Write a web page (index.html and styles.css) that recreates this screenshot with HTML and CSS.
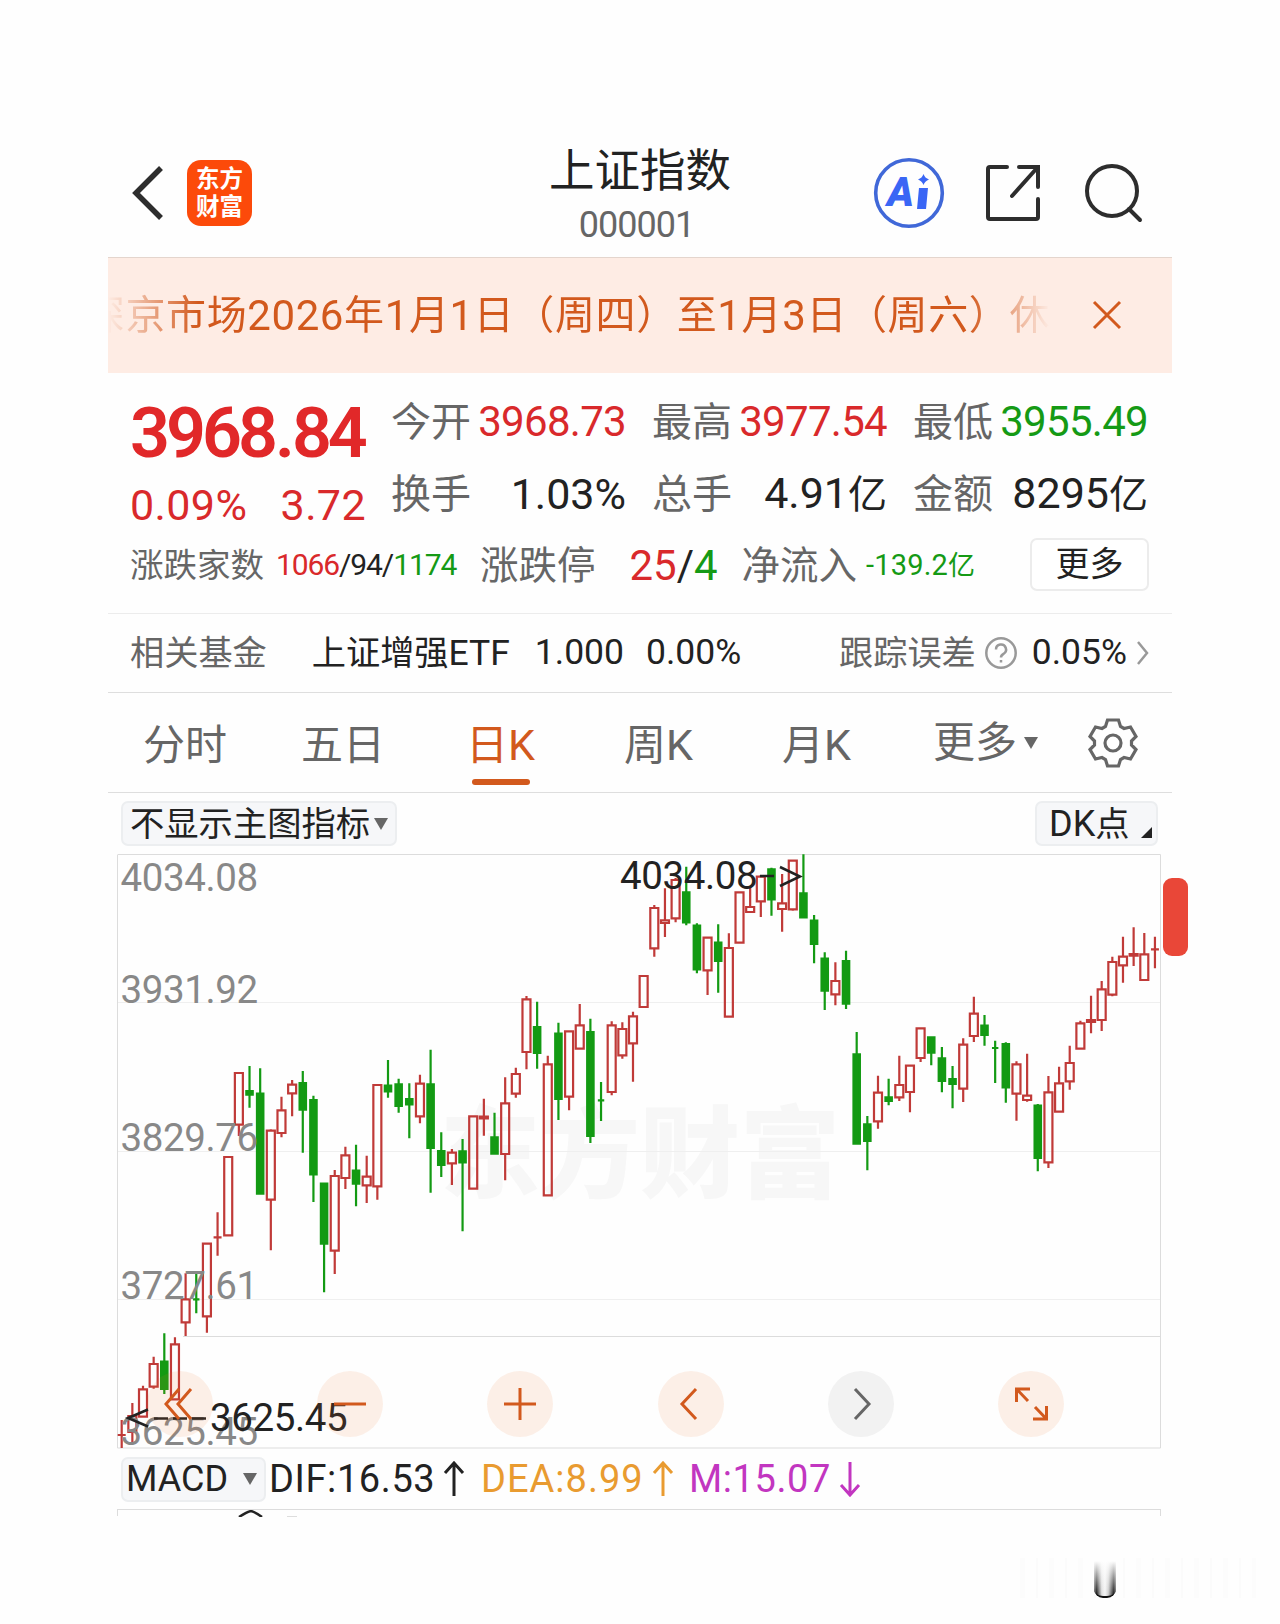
FILE: index.html
```html
<!DOCTYPE html>
<html lang="zh-CN">
<head>
    <meta charset="UTF-8">
    <title>上证指数</title>
    <link rel="stylesheet" href="styles.css">
</head>
<body>
    <div id="app">
        <header class="header">
            <svg class="back" width="34" height="56" viewBox="0 0 34 56"><path d="M31 3 6 28l25 25"/></svg>
            <div class="logo"><span>东方</span><span>财富</span></div>
            <div class="title">
                <h1>上证指数</h1>
                <p>000001</p>
            </div>
            <div class="tools">
                <svg width="72" height="72" viewBox="0 0 72 72">
                    <circle class="ai-ring" cx="36" cy="36" r="33.3"/>
                    <text class="ai-text" x="14" y="49" textLength="27" lengthAdjust="spacingAndGlyphs">A</text>
                    <path class="ai-fill" d="M46 31h9l-2 21h-9z"/>
                    <path class="ai-fill" d="M50.500 17q1.300 4 5.500 5.500-4.200 1.500-5.500 5.500-1.300-4-5.500-5.500 4.200-1.500 5.500-5.500z"/>
                </svg>
                <svg class="share" width="56" height="58" viewBox="0 0 56 58">
                    <path d="M22 3H5q-2 0-2 2v48q0 2 2 2h46q2 0 2-2V35M34 3h19v20M52 4 27 32"/>
                </svg>
                <svg class="search" width="60" height="60" viewBox="0 0 60 60">
                    <circle cx="28" cy="28" r="25"/>
                    <path d="m45 46 11 11"/>
                </svg>
            </div>
        </header>

        <div class="notice">
            <div class="notice-text">深京市场<i>2026</i>年<i>1</i>月<i>1</i>日（周四）至<i>1</i>月<i>3</i>日（周六）休</div>
            <svg class="close" width="30" height="30" viewBox="0 0 30 30"><path d="m2 2 26 26M28 2 2 28"/></svg>
        </div>

        <section class="quote">
            <div class="quote-top">
                <div class="now up">
                    <strong>3968<i>.</i>84</strong>
                    <div class="change"><span>0.09%</span><span>3.72</span></div>
                </div>
                <dl class="stats">
                    <div><dt>今开</dt><dd class="up">3968.73</dd></div>
                    <div><dt>最高</dt><dd class="up">3977.54</dd></div>
                    <div><dt>最低</dt><dd class="down">3955.49</dd></div>
                    <div><dt>换手</dt><dd class="wide">1.03%</dd></div>
                    <div><dt>总手</dt><dd class="wide">4.91<b>亿</b></dd></div>
                    <div><dt>金额</dt><dd class="wide">8295<b>亿</b></dd></div>
                </dl>
            </div>
            <div class="breadth">
                <span class="label small">涨跌家数</span>
                <span class="counts"><span class="up">1066</span>/94/<span class="down">1174</span></span>
                <span class="label">涨跌停</span>
                <span class="limits"><span class="up">25</span>/<span class="down">4</span></span>
                <span class="label">净流入</span>
                <span class="inflow down">-139.2<b>亿</b></span>
                <button class="more">更多</button>
            </div>
        </section>

        <div class="fund">
            <span class="label">相关基金</span>
            <span class="fund-name">上证增强<i>ETF</i></span>
            <i class="fund-price">1.000</i>
            <i class="fund-rate">0.00%</i>
            <span class="label error-label">跟踪误差</span>
            <svg class="help" width="34" height="34" viewBox="0 0 34 34">
                <circle cx="17" cy="17" r="14.700"/>
                <path d="M12 13.500a5 5 0 1 1 7.500 4.300q-2.500 1.400-2.500 3.700M17 24v2.500"/>
            </svg>
            <i class="error-rate">0.05%</i>
            <svg class="arrow" width="14" height="28" viewBox="0 0 14 28"><path d="m2 3 9 11-9 11"/></svg>
        </div>

        <nav class="tabs">
            <a class="tab">分时</a>
            <a class="tab">五日</a>
            <a class="tab k active">日<i>K</i></a>
            <a class="tab k">周<i>K</i></a>
            <a class="tab k">月<i>K</i></a>
            <a class="tab tab-more">更多<span class="caret"></span></a>
            <svg class="gear" width="52" height="52" viewBox="-26 -26 52 52">
                <path d="M-5.500-23H5.500L7.500-16.500 11-14.500 17.500-16 23-6.500 18.500-2V2L23 6.500 17.500 16 11 14.500 7.500 16.500 5.500 23H-5.500L-7.500 16.500-11 14.500-17.500 16-23 6.500-18.500 2V-2L-23-6.500-17.500-16-11-14.500-7.500-16.500z"/>
                <circle r="8"/>
            </svg>
        </nav>

        <div class="indicator-bar">
            <div class="chip">不显示主图指标<span class="caret"></span></div>
            <div class="chip dk"><i>DK</i>点<span class="corner"></span></div>
        </div>

        <div class="chart">
            <svg width="1044" height="596" viewBox="0 0 1044 596">
                <text class="brand" x="323" y="336">东方财富</text>
                <g class="grid">
                    <path d="M1 148.500h1042M1 297.500h1042M1 445.500h1042"/>
                    <path class="gap-line" d="M66 482.500h977"/>
                    <path class="frame" d="M1 .500h1042.500v593.500H.500V.500"/>
                </g>
                <g id="candles"></g>
                <g class="axis">
                    <text x="3.500" y="37">4034.08</text>
                    <text x="3.500" y="149">3931.92</text>
                    <text x="3.500" y="297">3829.76</text>
                    <text x="3.500" y="445">3727.61</text>
                    <text x="3.500" y="591">3625.45</text>
                </g>
                <g class="mark">
                    <text x="503" y="34.500">4034.08</text>
                    <path d="M643 22h14M663 13l20 9.500-20 9.500"/>
                    <text x="93" y="577">3625.45</text>
                    <path d="M31 555.500 11 564l20 8.500M37 564.500h14M56 564.500h14M75 564.500h14"/>
                </g>
            </svg>
            <div class="controls">
                <button><svg viewBox="-33 -33 66 66"><path d="M-1-15-14 0-1 15M11-15-2 0 11 15"/></svg></button>
                <button><svg viewBox="-33 -33 66 66"><path d="M-16 0h32"/></svg></button>
                <button><svg viewBox="-33 -33 66 66"><path d="M-16 0h32M0-16v32"/></svg></button>
                <button><svg viewBox="-33 -33 66 66"><path d="M5-15-9 0 5 15"/></svg></button>
                <button class="off"><svg viewBox="-33 -33 66 66"><path d="M-6-15 8 0-6 15"/></svg></button>
                <button><svg viewBox="-33 -33 66 66"><path d="M-1-15h-13.500V-2M-14-14.500-3-3M2 15h13.500V2M15 14.500 4 3"/></svg></button>
            </div>
            <div class="side-tag"></div>
        </div>

        <div class="macd">
            <div class="chip"><i>MACD</i><span class="caret"></span></div>
            <span class="dif">DIF:16.53<svg width="22" height="36" viewBox="0 0 22 36"><path d="M11 35V2M2 12l9-10 9 10"/></svg></span>
            <span class="dea">DEA:8.99<svg width="22" height="36" viewBox="0 0 22 36"><path d="M11 35V2M2 12l9-10 9 10"/></svg></span>
            <span class="m">M:15.07<svg width="22" height="36" viewBox="0 0 22 36"><path d="M11 1v33M2 24l9 10 9-10"/></svg></span>
        </div>
        <div class="macd-chart">
            <svg width="200" height="7" viewBox="0 0 200 7"><path d="M121 7q8-5 12-6 4 1 11 6"/><path class="dea-line" d="M169 6.500h10"/></svg>
        </div>
    </div>
    <div class="smudge"><span></span></div>
    <script src="script.js"></script>
</body>
</html>
```
FILE: styles.css
```css
*{
    box-sizing: border-box;
    margin: 0;
    padding: 0;
}
body{
    height: 1624px;
    overflow: hidden;
    background: #fefefe;
    color: #222;
    font-family: Roboto, "Noto Sans CJK SC", sans-serif;
}
i, b{
    font-style: normal;
    font-weight: 400;
}
button{
    border: none;
    font-family: inherit;
}
svg{
    display: block;
    flex: none;
    fill: none;
}
#app{
    width: 1064px;
    margin-left: 108px;
    padding-top: 130px;
    white-space: nowrap;
}
.up{
    color: #d9292b;
}
.down{
    color: #159a15;
}
.label, dt{
    color: #666;
}

/* header */
.header{
    display: grid;
    grid-template-columns: 34px 64px 1fr auto;
    align-items: center;
    height: 127px;
    padding: 0 28px 2px 22px;
    position: relative;
}
.back{
    stroke: #2d2d2d;
    stroke-width: 5.5;
}
.logo{
    width: 65px;
    height: 66px;
    margin-left: 23px;
    padding-top: 3px;
    border-radius: 14px;
    background: #fc4a0a;
    color: #fff;
    font-family: "Noto Sans CJK SC", sans-serif;
    font-size: 23.500px;
    font-weight: 700;
    line-height: 28px;
    text-align: center;
}
.logo span{
    display: block;
}
.title{
    position: absolute;
    left: 0;
    right: 0;
    top: 11px;
    text-align: center;
}
.title h1{
    font-size: 45.5px;
    font-weight: 400;
    line-height: 62px;
}
.title p{
    color: #666;
    font-size: 36px;
    line-height: 50px;
    letter-spacing: -1px;
    margin-top: -3px;
    padding-right: 7px;
}
.tools{
    grid-column: 4;
    display: flex;
    align-items: center;
}
.ai-ring{
    stroke: #4068d8;
    stroke-width: 3.6;
}
.ai-fill, .ai-text{
    fill: #3a66f5;
}
.ai-text{
    font-size: 41px;
    font-weight: 900;
    font-style: italic;
}
.share, .search{
    stroke: #2d2d2d;
    stroke-width: 4;
    stroke-linecap: round;
}
.share{
    margin-left: 40px;
}
.search{
    margin-left: 43px;
}

/* notice */
.notice{
    display: flex;
    align-items: center;
    height: 116px;
    border-top: 1px solid #e4d5cd;
    background: #feece4;
    color: #d2591d;
}
.notice-text{
    display: flex;
    justify-content: flex-end;
    width: 942px;
    overflow: hidden;
    font-size: 40px;
    line-height: 60px;
    letter-spacing: .6px;
    -webkit-mask-image: linear-gradient(90deg, transparent, #000 90px, #000 860px, transparent);
    mask-image: linear-gradient(90deg, transparent, #000 90px, #000 860px, transparent);
}
.notice-text i{
    font-size: 42px;
}
.close{
    margin-left: 42px;
    margin-top: -1px;
    stroke: #d2591d;
    stroke-width: 3;
}

/* quote */
.quote{
    height: 241px;
    padding: 12px 23px 0 22px;
    border-bottom: 1px solid #ececec;
}
.quote-top{
    display: flex;
    height: 144px;
}
.now{
    width: 236px;
    margin-right: 25px;
}
.now strong{
    display: block;
    height: 94px;
    font-size: 70px;
    font-weight: 600;
    line-height: 96px;
    letter-spacing: -4px;
    color: #e12829;
}
.now strong i{
    font-weight: 600;
    margin: 0 1px;
}
.change{
    display: flex;
    justify-content: space-between;
    font-size: 43px;
    line-height: 52px;
    letter-spacing: .4px;
}
.stats{
    display: grid;
    grid-template-columns: repeat(3, 235px);
    grid-auto-rows: 72px;
    column-gap: 26px;
}
.stats div{
    display: flex;
    justify-content: space-between;
    align-items: center;
}
.stats dt{
    font-size: 40px;
    line-height: 60px;
    padding-top: 4px;
}
.stats dd{
    font-size: 42px;
    line-height: 60px;
    letter-spacing: -.7px;
    padding-top: 2px;
}
.stats .wide{
    font-size: 43px;
    letter-spacing: 0;
}
.stats b{
    font-size: 39px;
}
.breadth{
    display: flex;
    align-items: center;
    height: 70px;
    font-size: 38.500px;
    line-height: 50px;
}
.breadth .label{
    padding-top: 4px;
}
.breadth .small{
    font-size: 33.500px;
}
.counts{
    width: 182px;
    margin: 0 22px 0 12px;
    padding-top: 2px;
    font-size: 30px;
    letter-spacing: -1.100px;
}
.limits{
    width: 86px;
    margin: 0 26px 0 34px;
    padding-top: 3px;
    font-size: 42px;
    font-weight: 450;
}
.inflow{
    margin-left: 9px;
    padding-top: 2px;
    font-size: 29px;
    letter-spacing: .2px;
}
.inflow b{
    font-size: 27px;
}
.more{
    width: 119px;
    height: 53px;
    margin-left: auto;
    border: 2px solid #ececec;
    border-radius: 7px;
    background: #fff;
    color: #222;
    font-size: 34px;
    line-height: 44px;
}

/* related fund */
.fund{
    display: flex;
    align-items: center;
    height: 79px;
    padding: 0 22px;
    border-bottom: 1px solid #dedede;
    font-size: 34.200px;
}
.fund span{
    padding-bottom: 6px;
}
.fund i{
    font-size: 35.500px;
}
.fund > i{
    padding-bottom: 3px;
}
.fund-name{
    margin-left: 45px;
}
.fund .fund-price{
    margin-left: 25px;
}
.fund .fund-rate{
    margin-left: 22px;
}
.error-label{
    margin-left: auto;
}
.help{
    margin: 0 14px 0 8px;
    stroke: #999;
    stroke-width: 2.5;
}
.arrow{
    margin-left: 9px;
    stroke: #999;
    stroke-width: 2.5;
}

/* period tabs */
.tabs{
    display: flex;
    align-items: center;
    height: 100px;
    padding-left: 35px;
    border-bottom: 1px solid #dedede;
    color: #666;
    font-size: 42px;
    line-height: 105px;
}
.tab{
    width: 158px;
    height: 100px;
    position: relative;
}
.k{
    padding-left: 7px;
}
.k i{
    font-size: 43px;
}
.active{
    color: #d2591d;
}
.active:after{
    content: '';
    position: absolute;
    left: 13px;
    bottom: 8px;
    width: 58px;
    height: 6px;
    border-radius: 3px;
    background: #d2591d;
}
.tab-more{
    display: flex;
    align-items: center;
    width: 154px;
}
.tab-more .caret{
    margin-left: 7px;
}
.caret{
    display: inline-block;
    border: 7px solid transparent;
    border-top: 12px solid #666;
    border-bottom: none;
}
.gear{
    stroke: #666;
    stroke-width: 3.2;
}

/* indicator chips */
.indicator-bar{
    display: flex;
    justify-content: space-between;
    padding: 8px 14px 8px 13px;
}
.chip{
    display: flex;
    align-items: center;
    height: 45px;
    border: 2px solid #eceef0;
    border-radius: 7px;
    background: #f6f7f9;
    padding: 0 7px;
    font-size: 34.300px;
    line-height: 40px;
}
.chip .caret{
    margin-left: 4px;
}
.dk{
    width: 123px;
    padding: 0 0 0 12px;
}
.dk i{
    font-size: 36px;
}
.corner{
    border-left: 11px solid transparent;
    border-bottom: 11px solid #222;
    margin: 18px 0 0 11px;
}

/* k-line */
.chart{
    width: 1044px;
    height: 595px;
    margin-left: 9px;
    position: relative;
}
.brand{
    fill: #f7f7f7;
    font-size: 100px;
    font-weight: 900;
}
.grid{
    stroke: #efefef;
}
.gap-line, .frame{
    stroke: #dcdcdc;
}
.axis, .mark{
    font-size: 38.500px;
    letter-spacing: -.4px;
}
.axis{
    fill: #888;
}
.mark{
    fill: #222;
}
.mark path{
    fill: none;
    stroke: #222;
    stroke-width: 2.5;
}
.rise{
    stroke: #c03a38;
    stroke-width: 2.2;
}
.fall{
    fill: #139a13;
    stroke: #139a13;
    stroke-width: 2.2;
}
.controls{
    display: flex;
    justify-content: space-between;
    position: absolute;
    left: 30px;
    top: 517px;
    width: 917px;
}
.controls button{
    width: 66px;
    height: 66px;
    border-radius: 50%;
    background: rgba(236,120,50,.11);
}
.controls svg{
    stroke: #d2591d;
    stroke-width: 3;
}
.controls .off{
    background: #f2f2f2;
}
.off svg{
    stroke: #666;
}
.side-tag{
    position: absolute;
    left: 1046px;
    top: 24px;
    width: 25px;
    height: 78px;
    border-radius: 9px;
    background: #e94738;
}

/* macd */
.macd{
    display: flex;
    align-items: center;
    height: 60px;
    padding-left: 13px;
    font-size: 38px;
    letter-spacing: .6px;
}
.macd .chip{
    width: 145px;
    padding: 0 0 0 3px;
    font-size: 36px;
    letter-spacing: 0;
}
.macd .chip .caret{
    margin-left: 15px;
}
.macd > span{
    display: flex;
    align-items: center;
    gap: 8px;
}
.macd span svg{
    stroke: currentColor;
    stroke-width: 3;
}
.dif{
    width: 215px;
    padding-left: 3px;
}
.dea{
    width: 208px;
    color: #e99b30;
    letter-spacing: 1px;
}
.m{
    color: #c236c0;
}
.macd-chart{
    width: 1044px;
    height: 7px;
    margin-left: 9px;
    border: 1px solid #dcdcdc;
    border-bottom: none;
}
.macd-chart svg{
    stroke: #222;
    stroke-width: 2.5;
}
.macd-chart .dea-line{
    stroke: #ddd;
    stroke-width: 1;
}

.smudge{
    width: 236px;
    height: 40px;
    margin: 42px 0 0 1020px;
    padding-left: 74px;
    background: repeating-linear-gradient(90deg, #fcfcfc 0 5px, #fefefe 5px 16px, #fbfbfb 16px 18px, #fefefe 18px 29px);
}
.smudge span{
    display: block;
    width: 22px;
    height: 40px;
    border-radius: 0 0 9px 9px;
    border-bottom: 2px solid #111;
    background: linear-gradient(#fefefe 8%, rgba(254,254,254,0)), linear-gradient(90deg, #777, #111 12%, #ddd 35%, #f4f4f4 50%, #ccc 65%, #111 90%, #777);
}
```
FILE: script.js
```js
// one row per day: rise(1)/fall(0), high, body top, body bottom, low
var days = [
    [1,566,581,581,594],[1,549,562,578,589],[1,531.7,535.3,562.7,562.7],[1,502.7,510,532.7,534.7],
    [0,479.3,507.7,535,540],[1,483.3,490.3,545.3,545.3],[1,419.3,445.3,468.3,482],[0,419.3,445.3,445.3,459.3],
    [1,388.7,389.7,462.3,478.7],[1,358.3,383.3,383.3,401.7],[1,302.7,303,381.3,381.3],[1,218.7,219,270.7,282],
    [0,212,237,240.7,253.7],[0,214.3,239.7,339.7,339.7],[1,275.3,276.7,345.7,396.3],[1,242.7,256.3,279,283.3],
    [1,226,230.7,239.3,262.3],[0,217,229,255.7,298.7],[0,241.7,246,320.3,348],[0,329.3,329.7,389.7,438.3],
    [1,316,322,396.7,420],[1,292.7,301.3,324,335],[0,290.7,316.7,329.7,352.3],[1,301.7,322.7,331.3,349],
    [1,230.3,231,332.3,345.7],[0,206,231.7,237.3,243.7],[0,224.7,230.3,252,258.7],[0,229.3,245,250.3,284.3],
    [1,220.7,229.7,262.3,269.3],[0,195.7,230.3,294,338.7],[0,278.3,297,311,323],[1,295,298.7,309.3,331],
    [0,285,297.3,308.3,377.3],[1,261.3,262.3,334.7,334.7],[1,244.7,262.7,264.3,281.7],[0,258.7,283.3,299.7,299.7],
    [1,223.3,249.3,300,326.3],[1,213.7,220,239.7,243.7],[1,142,145.3,198,215.3],[0,147.7,173,199,214.7],
    [1,201.7,210.3,341.3,341.3],[0,168.7,179.7,245,266],[1,176.7,177.3,242.7,256.3],[1,150,171.3,194.7,195.7],
    [0,164.7,178,282,289],[0,228,246.3,246.3,267],[1,167.3,171.3,238,241.3],[1,168.3,175,201.3,204.7],
    [1,157.7,162.3,189.3,227.7],[1,121.3,122,153,153],[1,51,54,94.3,102.7],[1,34.3,66.3,69,83],
    [1,24,26,64.3,68.3],[0,12.7,38.3,68.3,71.3],[0,69.3,71.7,115.3,119.3],[1,83,83.7,116.3,141],
    [0,70.3,88.7,107,138.7],[1,79.3,94,162.7,162.7],[1,37.7,38.3,88.7,88.7],[1,32.7,53,58,58],
    [1,21,22.7,47.3,63],[0,13.7,15.3,45.3,61.7],[1,20,49.3,55,77.7],[1,6,6.7,55.3,56.7],
    [0,0.3,39.3,63.3,63.3],[0,61,66.7,90,109.3],[0,98.3,104.7,136.7,156],[1,108.3,127,140.3,151.3],
    [0,96.7,107,149.7,155],[0,178,200.3,289.7,289.7],[0,262,270.3,287,316.3],[1,221.7,238.7,267.3,274.7],
    [0,224.7,243.3,247,251.3],[1,201.7,231,243.3,247],[1,211,211.7,238,258.3],[1,173.7,174.3,204,208],
    [0,182.7,183.3,198.7,211.3],[0,193,204.3,227,238.3],[0,212,225,230,254.3],[1,184.3,190.7,234.7,248],
    [1,142.7,159.7,182,188],[0,161,171.7,181,191.7],[0,186.7,194,194,229],[0,188.3,190,233.3,248.7],
    [1,207.3,210.3,239.7,266.7],[1,199.7,241.7,246,247.7],[0,250,251.7,304,317.3],[1,222,238.3,308.3,314],
    [1,212.7,229.3,257.7,257.7],[1,191.7,209,227.3,235.7],[1,166.7,169.3,194.7,194.7],[1,141.7,166,168,179.3],
    [1,127,135.3,166,177],[1,102.7,108,140.7,142.3],[1,82.7,102.7,111.3,128.7],[1,73.3,100,101.7,112],
    [1,79,100.3,126,126],[1,82.7,95.3,95.3,114.3]
];
var step = 10.652;
var html = '';
for(var i = 0;i<days.length;i++){
    var d = days[i];
    var x = 4.7+i*step;
    var half = d[0] ? 4 : 3.2;
    // wick above, wick below, then the body
    html += '<path class="'+(d[0] ? 'rise' : 'fall')+'" d="M'+x+' '+d[1]+'V'+d[2]+'M'+x+' '+d[3]+'V'+d[4]+
        'M'+(x-half)+' '+d[2]+'H'+(x+half)+'V'+d[3]+'H'+(x-half)+'Z"/>';
}
document.getElementById('candles').innerHTML = html;
```
